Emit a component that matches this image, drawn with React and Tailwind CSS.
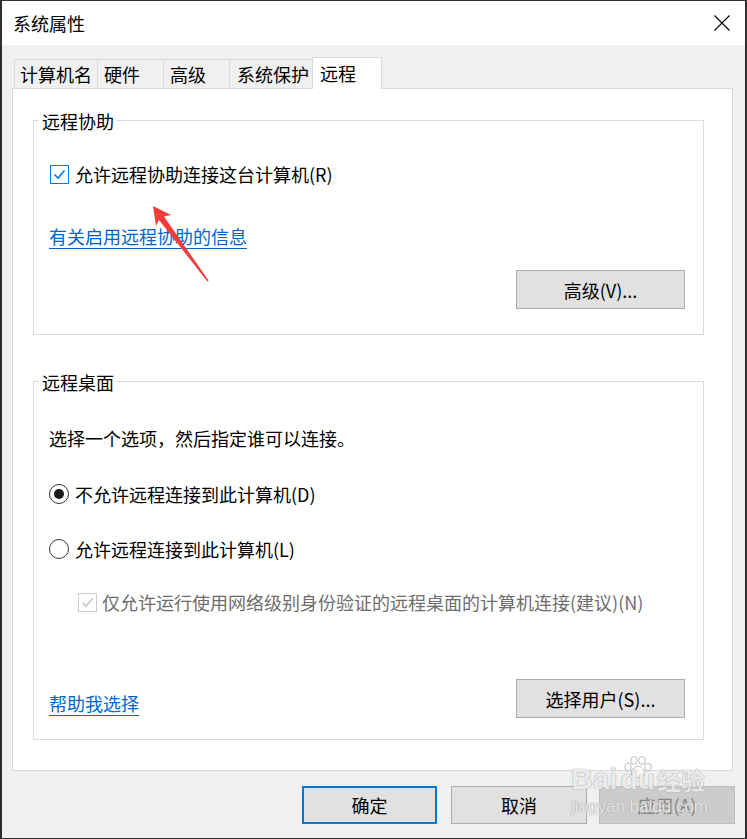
import React from 'react';

const font = "font-['Noto_Sans_CJK_SC','Microsoft_YaHei',sans-serif]";

const Tab = ({ label, width, pl, active }) => {
  if (active) {
    return (
      <div
        className={`relative z-10 -mb-px flex h-[32px] items-center border-x border-t border-[#d9d9d9] bg-white pb-[2px] text-black ${width} ${pl}`}
      >
        {label}
      </div>
    );
  }
  return (
    <div className={`flex h-[29px] items-center border-l border-t border-[#d9d9d9] bg-[#f0f0f0] text-black ${width} ${pl}`}>
      {label}
    </div>
  );
};

const Button = ({ children, className = '' }) => (
  <button className={`flex h-[39px] w-[169px] items-center justify-center border border-[#adadad] bg-[#e1e1e1] text-black ${className}`}>
    {children}
  </button>
);

const CheckBox = ({ disabled }) => (
  <span
    className={`flex h-[19px] w-[19px] shrink-0 items-center justify-center border bg-white ${
      disabled ? 'border-[#cccccc]' : 'border-[#0078d7]'
    }`}
  >
    <svg width="15" height="15" viewBox="0 0 15 15">
      <polyline
        points="2.5,7.5 6,11 12.5,3.5"
        fill="none"
        stroke={disabled ? '#c4c4c4' : '#0078d7'}
        strokeWidth="1.6"
      />
    </svg>
  </span>
);

const Radio = ({ checked }) => (
  <span className="flex h-[20px] w-[20px] shrink-0 items-center justify-center rounded-full border border-[#333333] bg-white">
    {checked && <span className="h-[10px] w-[10px] rounded-full bg-[#1a1a1a]" />}
  </span>
);

const GroupBox = ({ title, className, children }) => (
  <div className={`relative border border-[#dcdcdc] ${className}`}>
    <span className="absolute -top-[12px] left-[5px] bg-white px-[3px] leading-[24px] text-black">{title}</span>
    {children}
  </div>
);

export default function App() {
  return (
    <div className={`relative h-[839px] w-[747px] overflow-hidden bg-[#2e2e2e] pl-[2px] pt-px text-[18px] leading-[24px] ${font}`}>
      <div className="flex h-[837px] w-[743px] flex-col bg-[#f0f0f0]">
        {/* title bar */}
        <div className="flex h-[44px] items-center justify-between bg-white pl-[11px] pr-[15px]">
          <span className="text-black">系统属性</span>
          <svg width="16" height="16" viewBox="0 0 16 16">
            <path d="M0.5 0.5 L15.5 15.5 M15.5 0.5 L0.5 15.5" stroke="#000" strokeWidth="1.1" />
          </svg>
        </div>

        <div className="pl-[10px] pt-[12px]">
          {/* tabs */}
          <div className="ml-[2px] flex h-[31px] items-end">
            <Tab label="计算机名" width="w-[83px]" pl="pl-[5px]" />
            <Tab label="硬件" width="w-[66px]" pl="pl-[6px]" />
            <Tab label="高级" width="w-[66px]" pl="pl-[6px]" />
            <Tab label="系统保护" width="w-[83px]" pl="pl-[7px]" />
            <Tab label="远程" width="w-[70px]" pl="pl-[7px]" active />
          </div>

          {/* panel */}
          <div className="h-[683px] w-[721px] border border-[#d9d9d9] bg-white pl-[20px] pt-[31px]">
            <GroupBox title="远程协助" className="flex h-[215px] w-[671px] flex-col">
              <div className="flex flex-col pl-[15px] pt-[41px]">
                <label className="ml-px flex h-[24px] items-center gap-[6px] text-black">
                  <CheckBox />
                  允许远程协助连接这台计算机(R)
                </label>
                <a className="mt-[38px] self-start text-[#0066cc] underline underline-offset-[4px]">有关启用远程协助的信息</a>
                <Button className="mr-[18px] mt-[22px] self-end">高级(V)...</Button>
              </div>
            </GroupBox>

            <GroupBox title="远程桌面" className="mt-[46px] flex h-[359px] w-[671px] flex-col">
              <div className="flex flex-col pl-[15px] pt-[44px]">
                <p className="text-black">选择一个选项，然后指定谁可以连接。</p>
                <label className="mt-[32px] flex h-[24px] items-center gap-[6px] text-black">
                  <Radio checked />
                  不允许远程连接到此计算机(D)
                </label>
                <label className="mt-[31px] flex h-[24px] items-center gap-[6px] text-black">
                  <Radio />
                  允许远程连接到此计算机(L)
                </label>
                <label className="ml-[29px] mt-[29px] flex h-[24px] items-center gap-[5px] text-[#6d6d6d]">
                  <CheckBox disabled />
                  仅允许运行使用网络级别身份验证的远程桌面的计算机连接(建议)(N)
                </label>
                <div className="mr-[18px] mt-[65px] flex items-center justify-between">
                  <a className="pt-[9px] text-[#0066cc] underline underline-offset-[4px]">帮助我选择</a>
                  <Button>选择用户(S)...</Button>
                </div>
              </div>
            </GroupBox>
          </div>
        </div>

        {/* dialog buttons */}
        <div className="mt-[15px] flex justify-end pr-[10px]">
          <button className="flex h-[38px] w-[135px] items-center justify-center border-2 border-[#0078d7] bg-[#e1e1e1] text-black">
            确定
          </button>
          <button className="ml-[14px] flex h-[38px] w-[136px] items-center justify-center border border-[#adadad] bg-[#e1e1e1] text-black">
            取消
          </button>
          <button className="ml-[12px] flex h-[38px] w-[136px] items-center justify-center border border-[#bfbfbf] bg-[#cccccc] text-[#838383]">
            应用(A)
          </button>
        </div>
      </div>

      {/* red annotation arrow */}
      <svg className="pointer-events-none absolute left-0 top-0" width="747" height="839" viewBox="0 0 747 839">
        <polygon
          points="153,206 171,215 164,216.5 208.6,280.5 207.4,281.4 159,220 156,226"
          fill="#f23c3c"
        />
      </svg>

      {/* watermark */}
      <div className="pointer-events-none absolute left-[571px] top-[756px] select-none opacity-90">
        <div className="flex items-end">
          <span className="font-['Liberation_Sans',sans-serif] text-[30px] font-bold leading-[30px] text-white/80 [text-shadow:0_0_1px_#9a9a9a,0_0_1px_#9a9a9a]">
            Bai
          </span>
          <div className="ml-[3px] flex flex-col items-center">
            <svg width="30" height="22" viewBox="0 0 30 22">
              <g fill="rgba(255,255,255,0.8)" stroke="#a8a8a8" strokeWidth="0.8">
                <ellipse cx="5" cy="11" rx="3.2" ry="4" />
                <ellipse cx="11" cy="4.5" rx="3.2" ry="4" />
                <ellipse cx="19" cy="4.5" rx="3.2" ry="4" />
                <ellipse cx="25" cy="11" rx="3.2" ry="4" />
                <path d="M15 10 C10 10 7 17 9 20 C11 22 19 22 21 20 C23 17 20 10 15 10 Z" />
              </g>
            </svg>
            <span className="-mt-[12px] font-['Liberation_Sans',sans-serif] text-[28px] font-bold leading-[28px] text-white/80 [text-shadow:0_0_1px_#9a9a9a,0_0_1px_#9a9a9a]">
              du
            </span>
          </div>
          <span className="ml-[2px] text-[24px] font-bold leading-[28px] text-white/80 [text-shadow:0_0_1px_#9a9a9a,0_0_1px_#9a9a9a]">
            经验
          </span>
        </div>
        <div className="mt-[4px] font-['Liberation_Sans',sans-serif] text-[17px] leading-[18px] text-white/80 [text-shadow:0_0_1px_#9a9a9a,0_0_1px_#9a9a9a]">
          jingyan.baidu.com
        </div>
      </div>
    </div>
  );
}
